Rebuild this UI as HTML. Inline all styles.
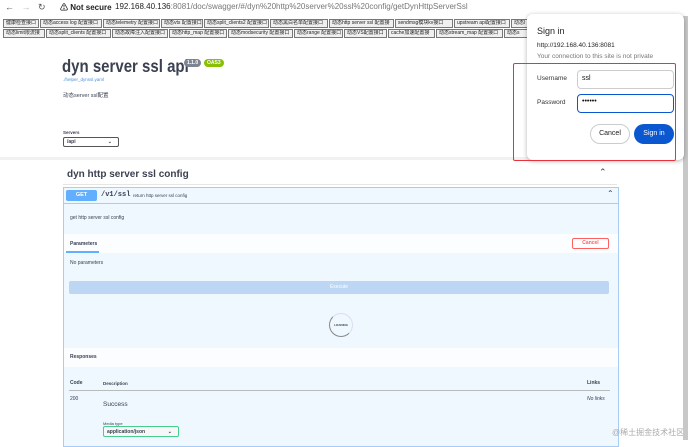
<!DOCTYPE html><html><head><meta charset="utf-8"><style>
*{box-sizing:border-box;margin:0;padding:0}
body{width:690px;height:440px;overflow:hidden;background:#fff;font-family:"Liberation Sans","Noto Sans CJK SC",sans-serif;position:relative;color:#3b4151}
.a{position:absolute;white-space:nowrap}
.lk{position:absolute;height:9px;border:1px solid #777;background:#f0f0f0;font-size:5px;line-height:7px;padding-left:2px;color:#222;overflow:hidden}
</style></head><body>
<div class="a" style="left:0;top:0;width:690px;height:16px;background:#fff"></div>
<div class="a" style="left:5px;top:2px;font-size:9px;color:#555">←&nbsp;&nbsp;&nbsp;<span style="color:#bbb">→</span>&nbsp;&nbsp;&nbsp;↻</div>
<div class="a" style="left:60px;top:2px;font-size:8px;font-weight:bold;color:#222">⚠ Not secure</div>
<div class="a" style="left:115px;top:2px;font-size:8px;color:#222">192.168.40.136<span style="color:#777">:8081/doc/swagger/#/dyn%20http%20server%20ssl%20config/getDynHttpServerSsl</span></div>
<div class="lk" style="left:3px;top:19px;width:36px">健康检查接口</div>
<div class="lk" style="left:40px;top:19px;width:62px">动态access log 配置接口</div>
<div class="lk" style="left:103px;top:19px;width:57px">动态telemetry 配置接口</div>
<div class="lk" style="left:161px;top:19px;width:42px">动态vts 配置接口</div>
<div class="lk" style="left:204px;top:19px;width:65px">动态split_clients2 配置接口</div>
<div class="lk" style="left:270px;top:19px;width:58px">动态黑白名单配置接口</div>
<div class="lk" style="left:329px;top:19px;width:65px">动态http server ssl 配置接口</div>
<div class="lk" style="left:395px;top:19px;width:58px">sendmsg模块kv接口</div>
<div class="lk" style="left:454px;top:19px;width:56px">upstream api配置接口</div>
<div class="lk" style="left:511px;top:19px;width:30px">动态l</div>
<div class="lk" style="left:3px;top:29px;width:42px">动态limit限流接口</div>
<div class="lk" style="left:46px;top:29px;width:65px">动态split_clients 配置接口</div>
<div class="lk" style="left:112px;top:29px;width:56px">动态故障注入配置接口</div>
<div class="lk" style="left:169px;top:29px;width:58px">动态http_map 配置接口</div>
<div class="lk" style="left:228px;top:29px;width:65px">动态modsecurity 配置接口</div>
<div class="lk" style="left:294px;top:29px;width:49px">动态range 配置接口</div>
<div class="lk" style="left:344px;top:29px;width:43px">动态VS配置接口</div>
<div class="lk" style="left:388px;top:29px;width:47px">cache加速配置接口</div>
<div class="lk" style="left:436px;top:29px;width:67px">动态stream_map 配置接口</div>
<div class="lk" style="left:504px;top:29px;width:30px">动态s</div>

<div class="a" style="left:62px;top:57px;font-size:15px;font-weight:bold;color:#3b4151;transform:scaleY(1.15);transform-origin:left top">dyn server ssl api</div>
<div class="a" style="left:184px;top:59px;background:#7d8492;color:#fff;font-size:5px;font-weight:bold;border-radius:5px;padding:1px 3px">1.1.0</div>
<div class="a" style="left:204px;top:59px;background:#89bf04;color:#fff;font-size:5px;font-weight:bold;border-radius:5px;padding:1px 3px">OAS3</div>
<div class="a" style="left:63px;top:77px;font-size:4.5px;color:#4990e2">./helper_dynssl.yaml</div>
<div class="a" style="left:63px;top:91px;font-size:5.5px">动态server ssl配置</div>
<div class="a" style="left:63px;top:130px;font-size:4.5px;font-weight:bold">Servers</div>
<div class="a" style="left:63px;top:137px;width:56px;height:10px;border:1px solid #555;border-radius:2px;font-size:5px;padding:1px 3px;font-weight:bold">/api<span style="position:absolute;right:6px">⌄</span></div>
<div class="a" style="left:0;top:157px;width:682px;height:3px;background:#f1f1f1"></div>

<div class="a" style="left:67px;top:169px;font-size:10px;font-weight:bold">dyn http server ssl config</div>
<div class="a" style="left:599px;top:167px;font-size:9px">⌃</div>
<div class="a" style="left:63px;top:184px;width:554px;height:1px;background:#e5e5e5"></div>
<div class="a" style="left:63px;top:187px;width:556px;height:260px;border:1px solid #a7cdf7;background:#eff7ff"></div>
<div class="a" style="left:64px;top:203px;width:554px;height:1px;background:#a7cdf7"></div>
<div class="a" style="left:66px;top:190px;width:31px;height:11px;background:#61affe;border-radius:2px;color:#fff;font-size:5.5px;font-weight:bold;text-align:center;line-height:11px">GET</div>
<div class="a" style="left:101px;top:191px;font-size:7px;font-weight:bold;font-family:'Liberation Mono',monospace">/v1/ssl</div>
<div class="a" style="left:133px;top:193px;font-size:4.5px">return http server ssl config</div>
<div class="a" style="left:607px;top:189px;font-size:8px">⌃</div>
<div class="a" style="left:70px;top:215px;font-size:5px">get http server ssl config</div>
<div class="a" style="left:64px;top:234px;width:554px;height:19px;background:#fbfdff"></div>
<div class="a" style="left:70px;top:241px;font-size:5px;font-weight:bold">Parameters</div>
<div class="a" style="left:66px;top:251px;width:33px;height:2px;background:#61affe"></div>
<div class="a" style="left:572px;top:238px;width:37px;height:11px;border:1px solid #ff6060;border-radius:2px;color:#ff6060;font-size:5px;font-weight:bold;text-align:center;line-height:9px;background:#fff">Cancel</div>
<div class="a" style="left:70px;top:260px;font-size:5px">No parameters</div>
<div class="a" style="left:69px;top:281px;width:540px;height:13px;background:#bdd6f4;border-radius:2px;color:#fff;font-size:5px;text-align:center;line-height:13px">Execute</div>
<div class="a" style="left:329px;top:313px;width:24px;height:24px;border-radius:50%;border:1px solid #dde;border-left-color:#888;border-bottom-color:#888;font-size:3px;text-align:center;line-height:22px;font-weight:bold">LOADING</div>
<div class="a" style="left:64px;top:348px;width:554px;height:19px;background:#fbfdff"></div>
<div class="a" style="left:70px;top:354px;font-size:5px;font-weight:bold">Responses</div>
<div class="a" style="left:70px;top:380px;font-size:5px;font-weight:bold">Code</div>
<div class="a" style="left:103px;top:381px;font-size:4.5px;font-weight:bold">Description</div>
<div class="a" style="left:587px;top:380px;font-size:5px;font-weight:bold">Links</div>
<div class="a" style="left:69px;top:390px;width:541px;height:1px;background:#bbb"></div>
<div class="a" style="left:70px;top:396px;font-size:5px">200</div>
<div class="a" style="left:103px;top:401px;font-size:6.5px">Success</div>
<div class="a" style="left:587px;top:396px;font-size:5px;font-style:italic">No links</div>
<div class="a" style="left:103px;top:421px;font-size:4px">Media type</div>
<div class="a" style="left:103px;top:426px;width:76px;height:11px;border:1px solid #49cc90;border-radius:2px;font-size:5px;font-weight:bold;padding:2px 3px;background:#f7f7f7">application/json<span style="position:absolute;right:6px">⌄</span></div>
<div class="a" style="left:612px;top:427px;font-size:8px;color:#aaa">@稀土掘金技术社区</div>
<div class="a" style="left:683px;top:16px;width:5px;height:424px;background:#c8c8c8"></div>

<div class="a" style="left:527px;top:14px;width:157px;height:146px;background:#fff;border-radius:6px;box-shadow:0 1px 5px rgba(0,0,0,.3)"></div>
<div class="a" style="left:537px;top:26px;font-size:9px;color:#1f1f1f">Sign in</div>
<div class="a" style="left:537px;top:42px;font-size:6.5px;color:#1f1f1f">http://192.168.40.136:8081</div>
<div class="a" style="left:537px;top:53px;font-size:6.5px;color:#777">Your connection to this site is not private</div>
<div class="a" style="left:537px;top:75px;font-size:6.5px;color:#333">Username</div>
<div class="a" style="left:577px;top:70px;width:97px;height:19px;border:1px solid #ccc;border-radius:4px;font-size:7px;padding:4px 4px;color:#111">ssl</div>
<div class="a" style="left:537px;top:99px;font-size:6.5px;color:#333">Password</div>
<div class="a" style="left:577px;top:94px;width:97px;height:19px;border:1.5px solid #0b57d0;border-radius:4px;font-size:7px;padding:3px 4px;color:#111">••••••</div>
<div class="a" style="left:590px;top:124px;width:40px;height:20px;border:1px solid #ccc;border-radius:10px;font-size:7px;text-align:center;line-height:18px;color:#222">Cancel</div>
<div class="a" style="left:634px;top:124px;width:40px;height:20px;background:#0b57d0;border-radius:10px;font-size:7px;text-align:center;line-height:20px;color:#fff">Sign in</div>
<div class="a" style="left:513px;top:63px;width:163px;height:98px;border:1.5px solid #e8323c;border-radius:2px"></div>
</body></html>
